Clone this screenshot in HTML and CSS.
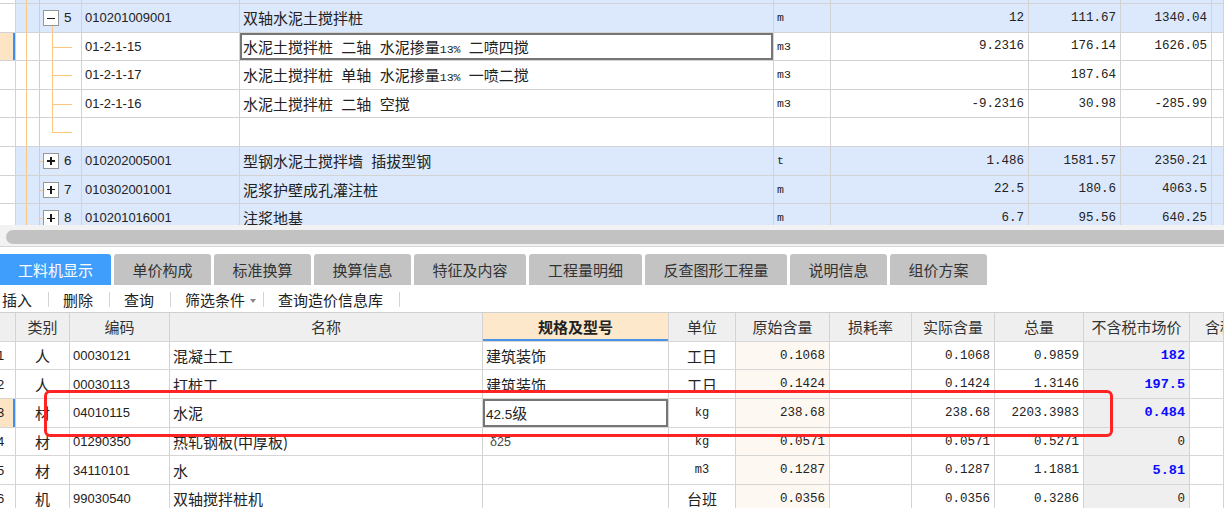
FILE: index.html
```html
<!DOCTYPE html>
<html lang="zh-CN">
<head>
<meta charset="utf-8">
<title>工料机显示</title>
<link rel="stylesheet" href="styles.css">
</head>
<body>
<div class="app">
  <div class="top-pane">
    <div class="top-grid">
      <div class="trow blue">
        <div class="c rh"></div>
        <div class="c tree"><i class="vl v1"></i><i class="vl v2"></i></div>
        <div class="c code"></div><div class="c name"></div><div class="c unit"></div>
        <div class="c num"></div><div class="c num"></div><div class="c num"></div><div class="c"></div>
      </div>
      <div class="trow blue">
        <div class="c rh"></div>
        <div class="c tree"><i class="vl v1"></i><i class="vl v2"></i><i class="vl v3 from-box"></i><b class="box minus"></b><span class="no">5</span></div>
        <div class="c code">010201009001</div>
        <div class="c name"><span>双轴水泥土搅拌桩</span></div>
        <div class="c unit">m</div>
        <div class="c num">12</div><div class="c num">111.67</div><div class="c num">1340.04</div><div class="c"></div>
      </div>
      <div class="trow">
        <div class="c rh sel"></div>
        <div class="c tree"><i class="vl v1"></i><i class="vl v2"></i><i class="vl v3"></i><i class="hl branch"></i></div>
        <div class="c code">01-2-1-15</div>
        <div class="c name focus"><span>水泥土搅拌桩 二轴 水泥掺量<span class="sm">13%</span> 二喷四搅</span></div>
        <div class="c unit">m3</div>
        <div class="c num">9.2316</div><div class="c num">176.14</div><div class="c num">1626.05</div><div class="c"></div>
      </div>
      <div class="trow">
        <div class="c rh"></div>
        <div class="c tree"><i class="vl v1"></i><i class="vl v2"></i><i class="vl v3"></i><i class="hl branch"></i></div>
        <div class="c code">01-2-1-17</div>
        <div class="c name"><span>水泥土搅拌桩 单轴 水泥掺量<span class="sm">13%</span> 一喷二搅</span></div>
        <div class="c unit">m3</div>
        <div class="c num"></div><div class="c num">187.64</div><div class="c num"></div><div class="c"></div>
      </div>
      <div class="trow">
        <div class="c rh"></div>
        <div class="c tree"><i class="vl v1"></i><i class="vl v2"></i><i class="vl v3"></i><i class="hl branch"></i></div>
        <div class="c code">01-2-1-16</div>
        <div class="c name"><span>水泥土搅拌桩 二轴 空搅</span></div>
        <div class="c unit">m3</div>
        <div class="c num">-9.2316</div><div class="c num">30.98</div><div class="c num">-285.99</div><div class="c"></div>
      </div>
      <div class="trow">
        <div class="c rh"></div>
        <div class="c tree"><i class="vl v1"></i><i class="vl v2"></i><i class="vl v3 to-mid"></i><i class="hl branch"></i></div>
        <div class="c code"></div><div class="c name"></div><div class="c unit"></div>
        <div class="c num"></div><div class="c num"></div><div class="c num"></div><div class="c"></div>
      </div>
      <div class="trow blue">
        <div class="c rh"></div>
        <div class="c tree"><i class="vl v1"></i><i class="vl v2"></i><i class="hl tick"></i><b class="box plus"></b><span class="no">6</span></div>
        <div class="c code">010202005001</div>
        <div class="c name"><span>型钢水泥土搅拌墙 插拔型钢</span></div>
        <div class="c unit">t</div>
        <div class="c num">1.486</div><div class="c num">1581.57</div><div class="c num">2350.21</div><div class="c"></div>
      </div>
      <div class="trow blue">
        <div class="c rh"></div>
        <div class="c tree"><i class="vl v1"></i><i class="vl v2"></i><i class="hl tick"></i><b class="box plus"></b><span class="no">7</span></div>
        <div class="c code">010302001001</div>
        <div class="c name"><span>泥浆护壁成孔灌注桩</span></div>
        <div class="c unit">m</div>
        <div class="c num">22.5</div><div class="c num">180.6</div><div class="c num">4063.5</div><div class="c"></div>
      </div>
      <div class="trow blue">
        <div class="c rh"></div>
        <div class="c tree"><i class="vl v1"></i><i class="vl v2"></i><i class="hl tick"></i><b class="box plus"></b><span class="no">8</span></div>
        <div class="c code">010201016001</div>
        <div class="c name"><span>注浆地基</span></div>
        <div class="c unit">m</div>
        <div class="c num">6.7</div><div class="c num">95.56</div><div class="c num">640.25</div><div class="c"></div>
      </div>
    </div>
  </div>

  <div class="hscroll"><div class="thumb"></div></div>

  <div class="tabs">
    <div class="tab active">工料机显示</div>
    <div class="tab w96">单价构成</div>
    <div class="tab w96">标准换算</div>
    <div class="tab w96">换算信息</div>
    <div class="tab w112">特征及内容</div>
    <div class="tab w113">工程量明细</div>
    <div class="tab w142">反查图形工程量</div>
    <div class="tab w97">说明信息</div>
    <div class="tab w97">组价方案</div>
  </div>

  <div class="toolbar">
    <span class="tool first">插入</span><i class="sep"></i>
    <span class="tool">删除</span><i class="sep"></i>
    <span class="tool">查询</span><i class="sep"></i>
    <span class="tool">筛选条件<span class="caret"></span></span><i class="sep tight"></i>
    <span class="tool">查询造价信息库</span><i class="sep"></i>
  </div>

  <div class="bottom-pane">
    <div class="brow head">
      <div class="c rh"></div>
      <div class="c ctr">类别</div>
      <div class="c ctr">编码</div>
      <div class="c ctr">名称</div>
      <div class="c ctr spec-h">规格及型号</div>
      <div class="c ctr">单位</div>
      <div class="c ctr">原始含量</div>
      <div class="c ctr">损耗率</div>
      <div class="c ctr">实际含量</div>
      <div class="c ctr">总量</div>
      <div class="c ctr">不含税市场价</div>
      <div class="c last-h">含税市场价</div>
    </div>
    <div class="brow">
      <div class="c rh"><span class="rn">1</span></div>
      <div class="c ctr">人</div><div class="c code">00030121</div><div class="c name">混凝土工</div>
      <div class="c name">建筑装饰</div><div class="c ctr">工日</div>
      <div class="c num orig">0.1068</div><div class="c"></div><div class="c num">0.1068</div><div class="c num">0.9859</div>
      <div class="c num price"><b>182</b></div><div class="c"></div>
    </div>
    <div class="brow">
      <div class="c rh"><span class="rn">2</span></div>
      <div class="c ctr">人</div><div class="c code">00030113</div><div class="c name">打桩工</div>
      <div class="c name">建筑装饰</div><div class="c ctr">工日</div>
      <div class="c num orig">0.1424</div><div class="c"></div><div class="c num">0.1424</div><div class="c num">1.3146</div>
      <div class="c num price"><b>197.5</b></div><div class="c"></div>
    </div>
    <div class="brow">
      <div class="c rh sel"><span class="rn">3</span></div>
      <div class="c ctr">材</div><div class="c code">04010115</div><div class="c name">水泥</div>
      <div class="c name focus"><span><span class="lat">42.5</span>级</span></div><div class="c ctr"><span class="mono">kg</span></div>
      <div class="c num orig">238.68</div><div class="c"></div><div class="c num">238.68</div><div class="c num">2203.3983</div>
      <div class="c num price"><b>0.484</b></div><div class="c"></div>
    </div>
    <div class="brow">
      <div class="c rh"><span class="rn">4</span></div>
      <div class="c ctr">材</div><div class="c code">01290350</div><div class="c name">热轧钢板(中厚板)</div>
      <div class="c name delta">δ25</div><div class="c ctr"><span class="mono">kg</span></div>
      <div class="c num orig">0.0571</div><div class="c"></div><div class="c num">0.0571</div><div class="c num">0.5271</div>
      <div class="c num price">0</div><div class="c"></div>
    </div>
    <div class="brow">
      <div class="c rh"><span class="rn">5</span></div>
      <div class="c ctr">材</div><div class="c code">34110101</div><div class="c name">水</div>
      <div class="c name"></div><div class="c ctr"><span class="mono">m3</span></div>
      <div class="c num orig">0.1287</div><div class="c"></div><div class="c num">0.1287</div><div class="c num">1.1881</div>
      <div class="c num price"><b>5.81</b></div><div class="c"></div>
    </div>
    <div class="brow">
      <div class="c rh"><span class="rn">6</span></div>
      <div class="c ctr">机</div><div class="c code">99030540</div><div class="c name">双轴搅拌桩机</div>
      <div class="c name"></div><div class="c ctr">台班</div>
      <div class="c num orig">0.0356</div><div class="c"></div><div class="c num">0.0356</div><div class="c num">0.3286</div>
      <div class="c num price">0</div><div class="c"></div>
    </div>
  </div>

  <div class="redbox"></div>
</div>
</body>
</html>
```

FILE: styles.css
```css
* { box-sizing: border-box; }

html, body {
  margin: 0;
  padding: 0;
  background: #ffffff;
}

body {
  width: 1224px;
  height: 508px;
  overflow: hidden;
  font-family: "Noto Sans CJK SC", "Noto Sans", sans-serif;
  font-size: 15px;
  color: #222222;
}

.app {
  position: relative;
  width: 1224px;
  height: 508px;
  overflow: hidden;
}

/* ---------- top grid ---------- */
.top-pane {
  height: 225px;
  overflow: hidden;
}

.top-grid {
  margin-top: -24.6px;
}

.trow {
  display: grid;
  grid-template-columns: 16px 66px 158px 534px 57px 198px 92px 91px 1fr;
  height: 28.6px;
  border-bottom: 1px solid #d3d3d3;
  background: #ffffff;
}

.c {
  display: flex;
  align-items: center;
  border-right: 1px solid #d3d3d3;
  overflow: hidden;
  white-space: nowrap;
  min-width: 0;
}

.trow.blue .c { background: #dce8fb; }
.trow .c.rh { background: #ffffff; }
.c.rh.sel {
  background: #fde4c4 !important;
  box-shadow: inset -2px 0 0 #3d8ef0;
}

.code {
  font-family: "Liberation Sans", Arial, sans-serif;
  font-size: 13px;
  padding-left: 3px;
  color: #222;
}

.name {
  padding-left: 3px;
  font-size: 15px;
  word-spacing: 5px;
}

.sm {
  font-family: "Liberation Mono", monospace;
  font-size: 11.5px;
  word-spacing: 0;
}

.unit {
  font-family: "Liberation Mono", monospace;
  font-size: 11.5px;
  padding-left: 3px;
}

.num {
  justify-content: flex-end;
  padding-right: 4px;
  font-family: "Liberation Mono", monospace;
  font-size: 12.5px;
}

.focus {
  box-shadow: inset 0 0 0 2px #767676;
}

/* tree */
.tree {
  position: relative;
}

.vl {
  position: absolute;
  top: 0;
  bottom: 0;
  width: 1px;
  background: #fcc580;
}
.vl.v1 { left: 10px; }
.vl.v2 { left: 23px; }
.vl.v3 { left: 36px; }
.vl.from-box { top: 21px; }
.vl.to-mid { bottom: auto; height: 14px; }

.hl {
  position: absolute;
  top: 14px;
  height: 1px;
  background: #fcc580;
}
.hl.branch { left: 36px; width: 20px; }
.hl.tick { left: 23px; width: 4px; }

.box {
  position: absolute;
  left: 27px;
  top: 6px;
  width: 16px;
  height: 16px;
  border: 1px solid #979797;
  background: #ffffff;
}
.box::before {
  content: "";
  position: absolute;
  left: 3px;
  top: 6.5px;
  width: 8px;
  height: 1.2px;
  background: #1a1a1a;
}
.box.plus::after {
  content: "";
  position: absolute;
  left: 6.4px;
  top: 3px;
  width: 1.2px;
  height: 8px;
  background: #1a1a1a;
}

.no {
  position: absolute;
  left: 48px;
  top: 6px;
  font-family: "Liberation Sans", Arial, sans-serif;
  font-size: 13.5px;
  line-height: 16px;
}

/* ---------- scrollbar ---------- */
.hscroll {
  height: 22px;
  padding: 5px 0 0 6px;
  background: #f2f2f2;
  border-bottom: 1px solid #d6d6d6;
}
.thumb {
  height: 14px;
  background: #c2c2c2;
  border-radius: 7px 0 0 7px;
}

/* ---------- tabs ---------- */
.tabs {
  display: flex;
  gap: 3px;
  height: 38px;
  padding-top: 7px;
  background: #ffffff;
}

.tab {
  height: 31px;
  display: flex;
  align-items: center;
  justify-content: center;
  background: #c3c3c3;
  color: #333333;
  font-size: 15px;
  border-radius: 3px 3px 0 0;
}
.tab.active {
  width: 111px;
  background: #3f9dfc;
  color: #ffffff;
  border-radius: 0 3px 0 0;
}
.tab.w96 { width: 97px; }
.tab.w112 { width: 112px; }
.tab.w113 { width: 113px; }
.tab.w142 { width: 142px; }
.tab.w97 { width: 97px; }

/* ---------- toolbar ---------- */
.toolbar {
  display: flex;
  align-items: center;
  height: 28px;
  padding-top: 2px;
  border-bottom: 1px solid #cfcfcf;
  background: #ffffff;
}

.tool {
  display: flex;
  align-items: center;
  font-size: 15px;
  color: #222;
}
.tool.first { margin-left: 2px; }

.caret {
  width: 0;
  height: 0;
  margin-left: 5px;
  margin-top: 2px;
  border-left: 3px solid transparent;
  border-right: 3px solid transparent;
  border-top: 4px solid #888888;
}

.sep {
  display: block;
  width: 1px;
  height: 15px;
  background: #d4d4d4;
  margin: 0 14px 0 16px;
}
.sep.tight { margin-left: 7px; }

/* ---------- bottom grid ---------- */
.brow {
  display: grid;
  grid-template-columns: 16px 54px 100px 313px 186px 67px 94px 82px 83px 89px 106px 1fr;
  height: 28.7px;
  border-bottom: 1px solid #d6d6d6;
}

.brow.head .c {
  background: #efefef;
  color: #333333;
}
.brow.head .c.spec-h {
  background: #fde8cb;
  font-weight: bold;
  color: #222;
  box-shadow: inset 0 -2px 0 #4a93e8;
}

.ctr { justify-content: center; }

.last-h { padding-left: 15px; }

.rn {
  margin-left: -3px;
  font-family: "Liberation Sans", Arial, sans-serif;
  font-size: 13px;
}

.orig { background: #fdf8f2; }
.price { background: #efefef; }
.price b {
  color: #0a0aff;
  font-family: "Liberation Mono", monospace;
  font-size: 13.5px;
}

.mono {
  font-family: "Liberation Mono", monospace;
  font-size: 12px;
}

.lat {
  font-family: "Liberation Sans", Arial, sans-serif;
  font-size: 13.5px;
}

.delta {
  padding-left: 7px;
  font-family: "Liberation Sans", Arial, sans-serif;
  font-size: 12.5px;
  color: #444;
}

/* ---------- annotation ---------- */
.redbox {
  position: absolute;
  left: 44px;
  top: 390px;
  width: 1069px;
  height: 47px;
  border: 3px solid #ff2424;
  border-radius: 6px;
}
```
